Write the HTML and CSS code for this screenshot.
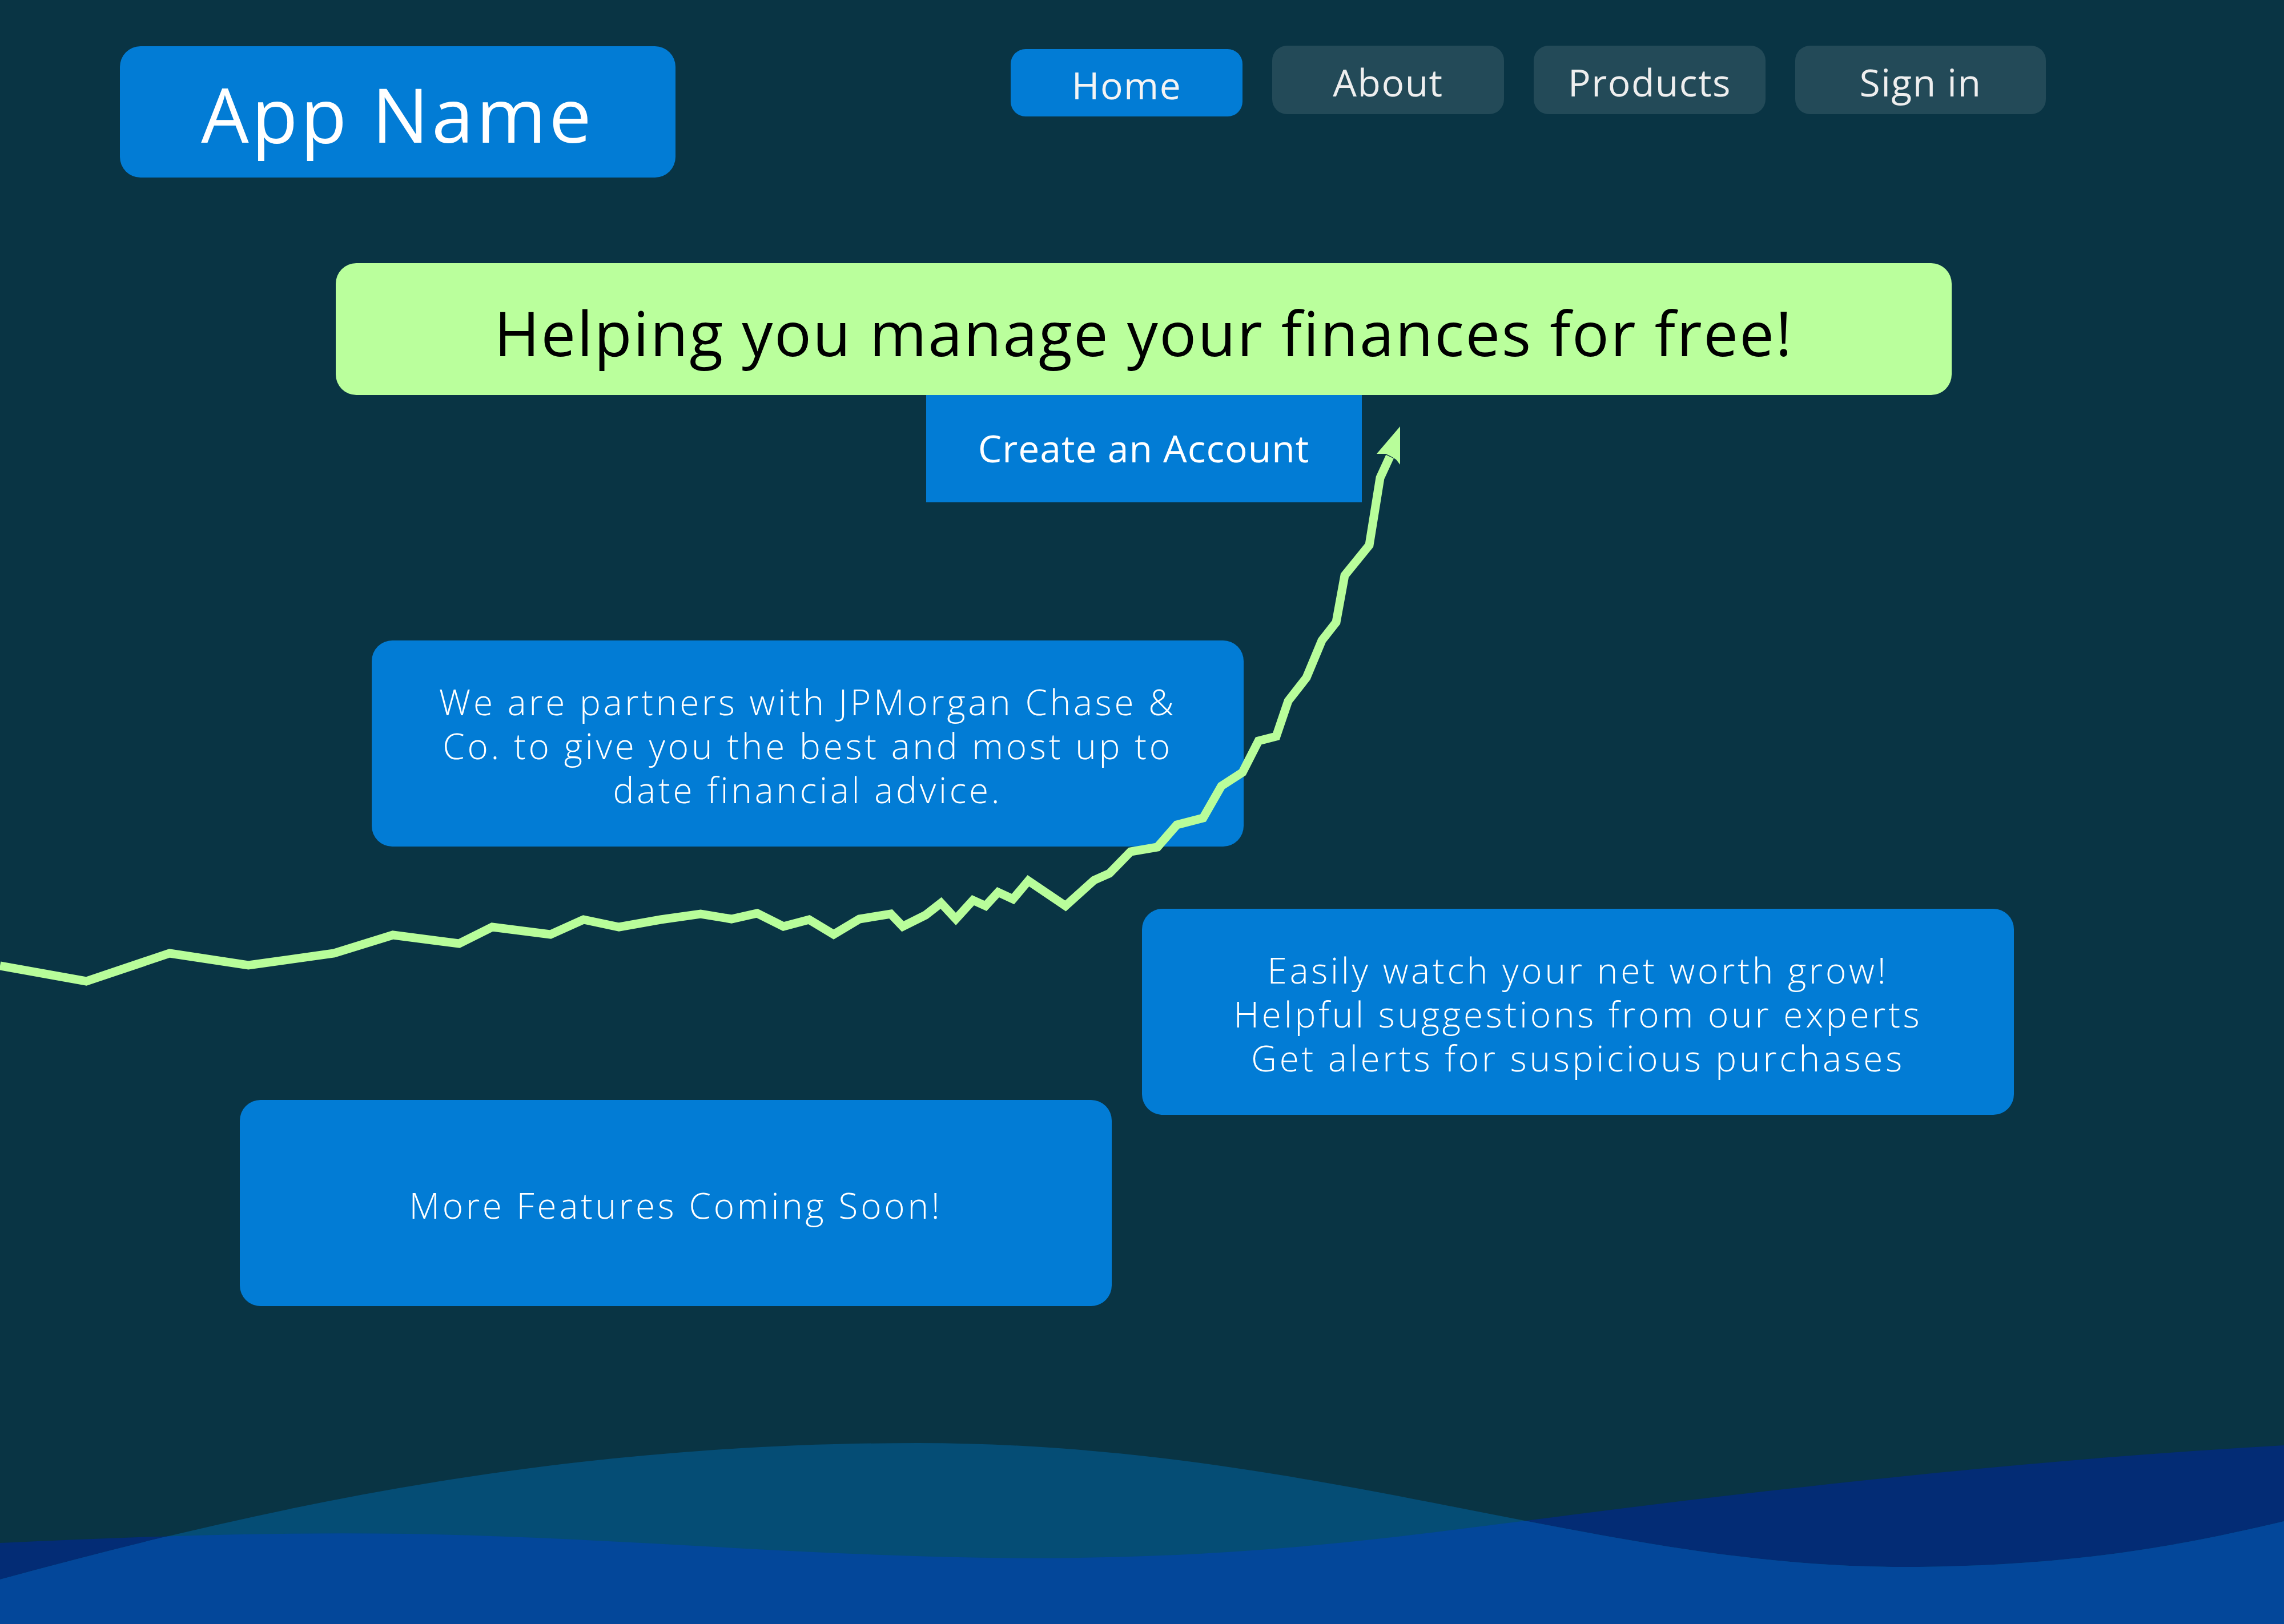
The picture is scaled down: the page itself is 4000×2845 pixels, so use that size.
FILE: index.html
```html
<!DOCTYPE html>
<html lang="en">
<head>
<meta charset="utf-8">
<title>App Name</title>
<link rel="stylesheet" href="styles.css">
</head>
<body>
<div class="page">
  <svg class="waves" viewBox="0 2500 4000 345" preserveAspectRatio="none" aria-hidden="true">
    <defs>
      <clipPath id="clipA">
        <path d="M0,2703 C200,2694 450,2683 714,2687 C1100,2693 1500,2735 1888,2729 C2250,2724 2500,2685 2704,2660 C3000,2622 3500,2560 4000,2532 V2845 H0 Z"/>
      </clipPath>
    </defs>
    <path class="wave-a" d="M0,2703 C200,2694 450,2683 714,2687 C1100,2693 1500,2735 1888,2729 C2250,2724 2500,2685 2704,2660 C3000,2622 3500,2560 4000,2532 V2845 H0 Z"/>
    <path class="wave-b" d="M0,2767 C500,2630 1000,2528 1607,2528 C2300,2528 2800,2745 3329,2745 C3650,2745 3850,2700 4000,2665 V2845 H0 Z"/>
    <path class="wave-ab" clip-path="url(#clipA)" d="M0,2767 C500,2630 1000,2528 1607,2528 C2300,2528 2800,2745 3329,2745 C3650,2745 3850,2700 4000,2665 V2845 H0 Z"/>
  </svg>

  <header class="header">
    <div class="logo">App Name</div>
    <nav class="nav">
      <a class="nav-btn active" href="#">Home</a>
      <a class="nav-btn" href="#">About</a>
      <a class="nav-btn" href="#">Products</a>
      <a class="nav-btn wide" href="#">Sign in</a>
    </nav>
  </header>

  <section class="hero">
    <h1 class="headline">Helping you manage your finances for free!</h1>
    <a class="cta" href="#">Create an Account</a>
  </section>

  <section class="features">
    <div class="card card-partners">We are partners with JPMorgan Chase &amp;<br>Co. to give you the best and most up to<br>date financial advice.</div>
    <div class="card-row">
      <div class="card card-list">Easily watch your net worth grow!<br>Helpful suggestions from our experts<br>Get alerts for suspicious purchases</div>
      <div class="card card-soon">More Features Coming Soon!</div>
    </div>
  </section>

  <svg class="chart" viewBox="0 0 4000 2845" aria-hidden="true">
    <polyline class="chart-line" points="0,1692 151,1719 297,1670 435,1691 585,1670 688,1638 804,1653 862,1624 964,1637 1022,1611 1084,1624 1157,1611 1227,1601 1281,1610 1326,1600 1372,1623 1417,1611 1460,1637 1505,1610 1560,1601 1581,1623 1621,1603 1648,1582 1674,1610 1704,1577 1726,1587 1748,1563 1774,1575 1801,1543 1866,1587 1916,1542 1943,1530 1980,1492 2027,1484 2061,1445 2107,1433 2139,1377 2176,1353 2204,1298 2235,1290 2256,1228 2288,1187 2315,1122 2340,1090 2355,1008 2398,955 2417,837 2434,800"/>
    <polygon class="chart-arrow" points="2452,747 2411,795 2427,795 2437,800 2445,805 2452,814"/>
  </svg>
</div>
</body>
</html>
```

FILE: styles.css
```css
* { box-sizing: border-box; }

html, body {
  margin: 0;
  padding: 0;
}

body {
  background: #093444;
  font-family: "Open Sans", "Noto Sans", sans-serif;
}

.page {
  position: relative;
  width: 4000px;
  height: 2845px;
  overflow: hidden;
  background: #093444;
}

.waves {
  position: absolute;
  left: 0;
  bottom: 0;
  width: 4000px;
  height: 345px;
  z-index: 0;
}
.wave-a { fill: #032c75; }
.wave-b { fill: #054d75; }
.wave-ab { fill: #03479a; }

.header {
  position: relative;
  z-index: 1;
  display: flex;
  align-items: flex-start;
  padding: 80px 0 0 210px;
}

.logo {
  width: 973px;
  height: 230px;
  margin-top: 1px;
  background: #027cd5;
  border-radius: 36px;
  color: #ffffff;
  font-size: 132px;
  letter-spacing: 5px;
  display: flex;
  align-items: center;
  justify-content: center;
  padding-top: 6px;
}

.nav {
  display: flex;
  align-items: flex-start;
  gap: 52px;
  margin-left: 587px;
}

.nav-btn {
  width: 406px;
  height: 120px;
  background: #234a58;
  border-radius: 26px;
  color: #eeeeee;
  font-size: 66px;
  letter-spacing: 1.5px;
  text-decoration: none;
  display: flex;
  align-items: center;
  justify-content: center;
  padding-top: 6px;
}
.nav-btn.active {
  background: #027cd5;
  height: 118px;
  margin-top: 6px;
  color: #f4f4f4;
}
.nav-btn.wide { width: 439px; }

.hero {
  position: relative;
  z-index: 1;
  width: 2830px;
  margin: 150px 0 0 588px;
  display: flex;
  flex-direction: column;
  align-items: center;
}

.headline {
  margin: 0;
  width: 100%;
  height: 231px;
  background: #baff9c;
  border-radius: 36px;
  color: #000000;
  font-size: 108px;
  font-weight: 400;
  letter-spacing: 2.5px;
  display: flex;
  align-items: center;
  justify-content: center;
  padding-top: 12px;
}

.cta {
  width: 763px;
  height: 188px;
  background: #027cd5;
  color: #ffffff;
  font-size: 66px;
  letter-spacing: 1px;
  text-decoration: none;
  display: flex;
  align-items: center;
  justify-content: center;
  padding-bottom: 4px;
}

.features {
  position: relative;
  z-index: 1;
}

.card {
  width: 1527px;
  height: 361px;
  background: #027cd5;
  border-radius: 36px;
  color: #ffffff;
  font-family: "Open Sans", "Liberation Sans", sans-serif;
  font-weight: 300;
  font-size: 62px;
  letter-spacing: 4.8px;
  line-height: 77px;
  text-align: center;
  display: flex;
  align-items: center;
  justify-content: center;
  padding-top: 8px;
}

.card-partners {
  margin: 242px 0 0 651px;
}

.card-row {
  display: flex;
  align-items: flex-start;
  margin-top: 109px;
}

.card-list {
  order: 2;
  margin-left: 53px;
}

.card-soon {
  order: 1;
  margin: 335px 0 0 420px;
}

.chart {
  position: absolute;
  left: 0;
  top: 0;
  width: 4000px;
  height: 2845px;
  z-index: 2;
  pointer-events: none;
}
.chart-line {
  fill: none;
  stroke: #b8fd9a;
  stroke-width: 15;
  stroke-linejoin: miter;
  stroke-miterlimit: 4;
}
.chart-arrow { fill: #b8fd9a; }
```
